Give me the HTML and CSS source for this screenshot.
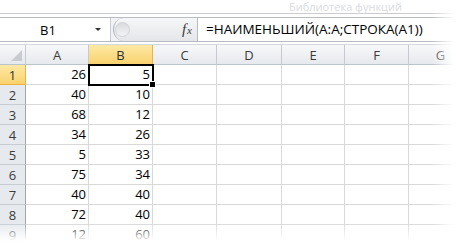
FILE: index.html
```html
<!DOCTYPE html>
<html lang="ru">
<head>
    <meta charset="UTF-8">
    <meta name="viewport" content="width=device-width, initial-scale=1.0">
    <title>НАИМЕНЬШИЙ</title>
    <link rel="stylesheet" href="styles.css">
</head>
<body>
    <div class="window">
        <div class="ribbon">
            <span class="group-label">Библиотека функций</span>
        </div>

        <div class="formula-bar">
            <div class="name-box">
                <span class="name">B1</span>
                <span class="arrow"></span>
            </div>
            <div class="fx-area">
                <span class="dimple"></span>
                <span class="fx"><i>f</i><i class="x">x</i></span>
            </div>
            <div class="formula">=НАИМЕНЬШИЙ(A:A;СТРОКА(A1))</div>
        </div>

        <div class="sheet">
            <div class="grid" id="grid"></div>
        </div>
    </div>

    <script>
        // Данные столбцов A и B
        const colA = [26, 40, 68, 34, 5, 75, 40, 72, 12];
        const colB = [5, 10, 12, 26, 33, 34, 40, 40, 60];
        const letters = ['A', 'B', 'C', 'D', 'E', 'F', 'G'];

        const grid = document.getElementById('grid');

        function addCell(cls, text) {
            const cell = document.createElement('div');
            cell.className = cls;
            cell.textContent = text || '';
            grid.appendChild(cell);
            return cell;
        }

        // Заголовки столбцов
        addCell('corner');
        letters.forEach(function (l) {
            addCell(l === 'B' ? 'col-head selected' : 'col-head', l);
        });

        // Строки
        for (let r = 0; r < colA.length; r++) {
            addCell(r === 0 ? 'row-head selected' : 'row-head', r + 1);
            addCell('cell num', colA[r]);
            addCell(r === 0 ? 'cell num active' : 'cell num', colB[r]);
            for (let c = 2; c < letters.length; c++) {
                addCell('cell');
            }
        }
    </script>
</body>
</html>
```

FILE: styles.css
```css
body {
    margin: 0;
    background-color: #fff;
    font-family: "Open Sans", "Noto Sans", sans-serif;
}
.window {
    position: relative;
    width: 458px;
    height: 246px;
    overflow: hidden;
}

/* Лента */
.ribbon {
    height: 13px;
    border-bottom: 1px solid #c9ccd1;
    display: flex;
    justify-content: flex-end;
    padding-right: 56px;
}
.group-label {
    font-size: 11px;
    line-height: 13px;
    color: #d9dce0;
}

/* Строка формул */
.formula-bar {
    display: flex;
    height: 23px;
    margin-top: 3px;
    background-color: #f1f2f4;
    border-top: 1px solid #b7bcc4;
    border-bottom: 1px solid #b7bcc4;
}
.name-box {
    width: 110px;
    background-color: #fff;
    border-right: 1px solid #c9cdd3;
    display: flex;
    align-items: center;
}
.name {
    width: 96px;
    text-align: center;
    font-size: 13px;
    color: #000;
}
.arrow {
    width: 0;
    height: 0;
    border-left: 3px solid transparent;
    border-right: 3px solid transparent;
    border-top: 3px solid #333;
    margin-left: -1px;
}
.fx-area {
    box-sizing: border-box;
    flex: 0 0 84px;
    display: flex;
    align-items: center;
    justify-content: space-between;
    background: linear-gradient(#f6f7f8, #e4e6e9);
    border-left: 1px solid #b2b7bf;
    border-radius: 11px 0 0 11px;
    margin-left: 2px;
    padding: 0 5px 0 1px;
}
.dimple {
    width: 13px;
    height: 13px;
    border-radius: 50%;
    background: linear-gradient(#d8dadd, #f3f4f5);
    border: 1px solid #d0d3d7;
}
.fx {
    font-family: "Liberation Serif", serif;
    font-size: 15px;
    color: #3a3a3a;
}
.fx .x {
    font-size: 11px;
    margin-left: 1px;
}
.formula {
    flex: 1;
    background-color: #fff;
    border-left: 1px solid #b7bcc4;
    padding-left: 8px;
    font-size: 13.5px;
    line-height: 23px;
    color: #000;
    white-space: nowrap;
}

/* Лист */
.sheet {
    position: relative;
    margin-top: 2px;
    border-top: 1px solid #d5d9de;
}
.grid {
    display: grid;
    grid-template-columns: 26px 63px 64px 64px 65px 63px 64px 64px;
    grid-auto-rows: 20px;
    font-size: 13px;
}
.corner,
.col-head,
.row-head {
    box-sizing: border-box;
    background: linear-gradient(#f7f8fa, #e6e9ed);
    border-right: 1px solid #c5cad1;
    border-bottom: 1px solid #bcc3cc;
    color: #3c3c3c;
    display: flex;
    align-items: center;
    justify-content: center;
}
.corner {
    position: relative;
}
.corner::after {
    content: "";
    position: absolute;
    right: 3px;
    bottom: 3px;
    border-left: 11px solid transparent;
    border-bottom: 11px solid #c8ccd1;
}
.row-head {
    background: #e6e9ee;
    border-bottom: 1px solid #c7ccd3;
    border-right: 1px solid #9ea6b0;
}
.col-head.selected,
.row-head.selected {
    background: linear-gradient(#fde9a6, #f9d26d);
    border-bottom: 1px solid #f0b343;
    border-right: 1px solid #f0b343;
    color: #333;
}
.cell {
    box-sizing: border-box;
    border-right: 1px solid #d9d9d9;
    border-bottom: 1px solid #d9d9d9;
    color: #000;
    padding-right: 2px;
    line-height: 19px;
}
.num {
    text-align: right;
}
.cell.active {
    position: relative;
    outline: 2px solid #000;
    outline-offset: -1px;
}
.cell.active::after {
    content: "";
    position: absolute;
    right: -4px;
    bottom: -4px;
    width: 5px;
    height: 5px;
    background-color: #000;
    border: 1px solid #fff;
}

/* Затухание по краям скриншота */
.window::after {
    content: "";
    position: absolute;
    top: 0;
    right: 0;
    width: 26px;
    height: 100%;
    background: linear-gradient(to right, rgba(255, 255, 255, 0), #fff 85%);
}
.sheet::after {
    content: "";
    position: absolute;
    left: 0;
    right: 0;
    top: 178px;
    height: 30px;
    background: linear-gradient(rgba(255, 255, 255, 0), #fff 60%);
}
```
